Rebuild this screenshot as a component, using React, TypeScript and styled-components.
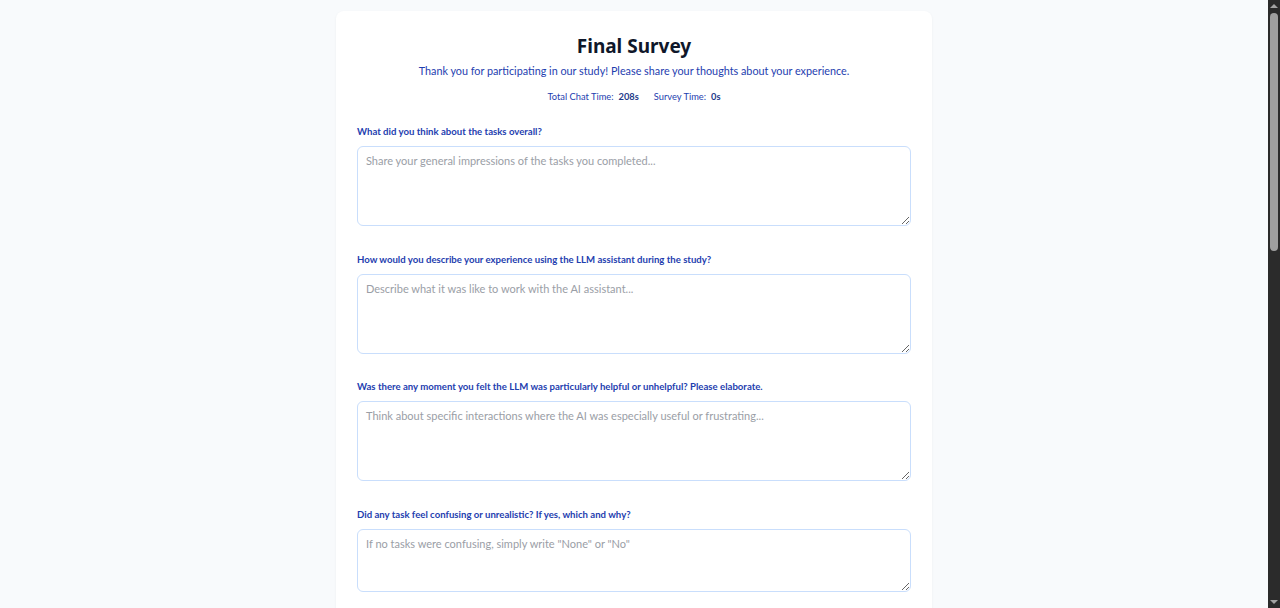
import React from 'react';
import styled, { createGlobalStyle } from 'styled-components';

const GlobalStyle = createGlobalStyle`
  body {
    margin: 0;
    background: #f8fafc;
    font-family: Lato, "Noto Sans", Arial, sans-serif;
  }
`;

interface Question {
  id: string;
  label: string;
  placeholder: string;
  height: number;
}

const questions: Question[] = [
  {
    id: 'tasks',
    label: 'What did you think about the tasks overall?',
    placeholder: 'Share your general impressions of the tasks you completed...',
    height: 80,
  },
  {
    id: 'experience',
    label: 'How would you describe your experience using the LLM assistant during the study?',
    placeholder: 'Describe what it was like to work with the AI assistant...',
    height: 80,
  },
  {
    id: 'moment',
    label: 'Was there any moment you felt the LLM was particularly helpful or unhelpful? Please elaborate.',
    placeholder: 'Think about specific interactions where the AI was especially useful or frustrating...',
    height: 80,
  },
  {
    id: 'confusing',
    label: 'Did any task feel confusing or unrealistic? If yes, which and why?',
    placeholder: 'If no tasks were confusing, simply write "None" or "No"',
    height: 63,
  },
];

const Shell = styled.div`
  display: flex;
  height: 100vh;
  overflow: hidden;
  background: #f8fafc;
`;

const Main = styled.main`
  flex: 1;
  min-width: 0;
  display: flex;
  justify-content: center;
  align-items: flex-start;
  padding-top: 11px;
`;

/* browser scrollbar as it appears in the screenshot */
const Scrollbar = styled.div`
  width: 12px;
  flex-shrink: 0;
  display: flex;
  flex-direction: column;
  align-items: center;
  background: #2b2b2b;
`;

const Arrow = styled.div<{ $down?: boolean }>`
  width: 0;
  height: 0;
  margin: 4px 0;
  border-left: 4px solid transparent;
  border-right: 4px solid transparent;
  ${({ $down }) =>
    $down ? 'border-top: 4px solid #a3a3a3;' : 'border-bottom: 4px solid #a3a3a3;'}
`;

const Thumb = styled.div`
  width: 8px;
  height: 238px;
  margin-top: 1px;
  border-radius: 4px;
  background: #9f9f9f;
`;

const Spacer = styled.div`
  flex: 1;
`;

const Card = styled.div`
  width: 596px;
  box-sizing: border-box;
  background: #ffffff;
  border-radius: 8px;
  box-shadow: 0 1px 3px rgba(15, 23, 42, 0.05);
  padding: 23px 21px 120px;
`;

const Header = styled.header`
  display: flex;
  flex-direction: column;
  align-items: center;
  margin-bottom: 21px;
`;

const Title = styled.h1`
  margin: 0;
  font-family: "Noto Sans", Lato, sans-serif;
  font-size: 19px;
  line-height: 24px;
  font-weight: 700;
  color: #0f172a;
`;

const Subtitle = styled.p`
  margin: 5px 0 0;
  font-size: 10.8px;
  line-height: 16px;
  color: #1e40af;
`;

const Stats = styled.div`
  display: flex;
  gap: 15px;
  margin-top: 11px;
  font-size: 9.3px;
  line-height: 14px;
  color: #1e40af;
`;

const Stat = styled.span`
  display: flex;
  gap: 5px;
`;

const StatValue = styled.strong`
  font-weight: 700;
  color: #1e3a8a;
`;

const Form = styled.form`
  display: flex;
  flex-direction: column;
  gap: 26.5px;
`;

const Field = styled.div`
  display: flex;
  flex-direction: column;
  gap: 7px;
`;

const Label = styled.label`
  font-size: 9.6px;
  line-height: 14px;
  font-weight: 700;
  color: #1e40af;
`;

const TextArea = styled.textarea<{ $height: number }>`
  box-sizing: border-box;
  width: 100%;
  height: ${({ $height }) => $height}px;
  padding: 6px 8px;
  border: 1px solid #c9defc;
  border-radius: 6px;
  background: #ffffff;
  font-family: inherit;
  font-size: 11px;
  line-height: 16px;
  color: #0f172a;
  outline: none;
  resize: vertical;

  &::placeholder {
    color: #9a9ea6;
  }
`;

export default function App() {
  return (
    <Shell>
      <GlobalStyle />
      <Main>
        <Card>
          <Header>
            <Title>Final Survey</Title>
            <Subtitle>
              Thank you for participating in our study! Please share your thoughts about your experience.
            </Subtitle>
            <Stats>
              <Stat>
                Total Chat Time: <StatValue>208s</StatValue>
              </Stat>
              <Stat>
                Survey Time: <StatValue>0s</StatValue>
              </Stat>
            </Stats>
          </Header>
          <Form>
            {questions.map((q) => (
              <Field key={q.id}>
                <Label htmlFor={q.id}>{q.label}</Label>
                <TextArea id={q.id} placeholder={q.placeholder} $height={q.height} />
              </Field>
            ))}
          </Form>
        </Card>
      </Main>
      <Scrollbar>
        <Arrow />
        <Thumb />
        <Spacer />
        <Arrow $down />
      </Scrollbar>
    </Shell>
  );
}
